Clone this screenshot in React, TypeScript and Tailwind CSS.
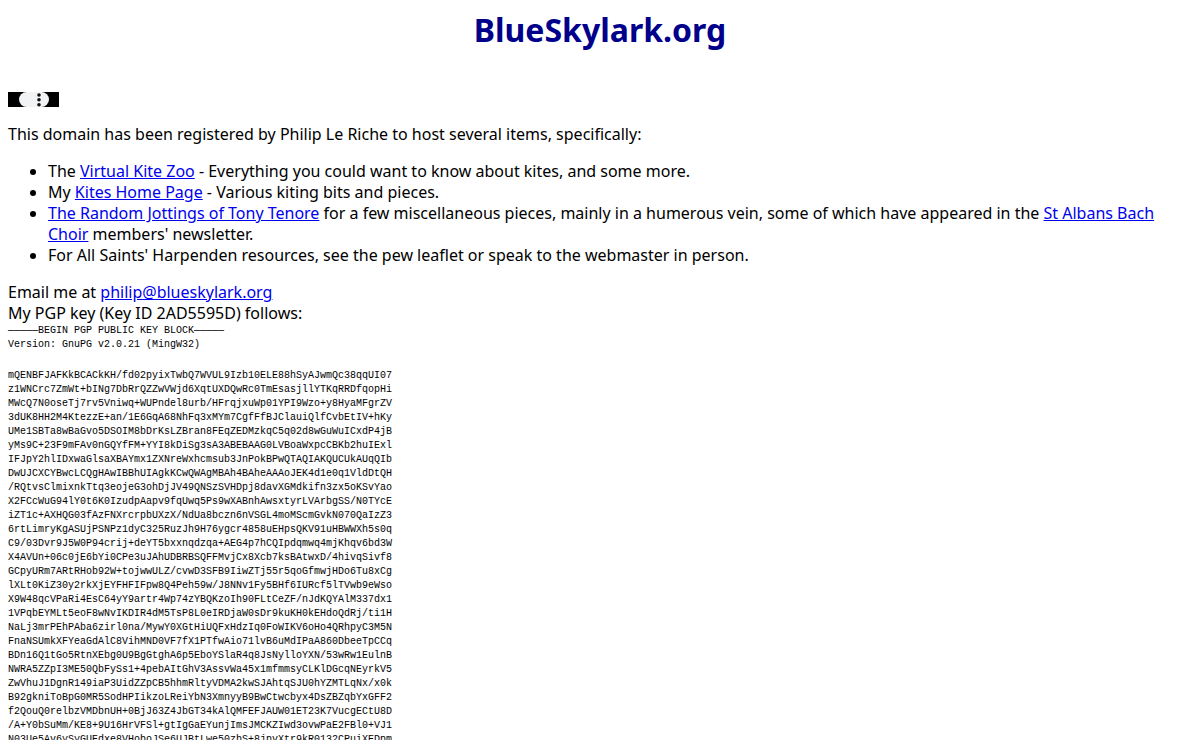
const keyLines = [
  "mQENBFJAFKkBCACkKH/fd02pyixTwbQ7WVUL9Izb10ELE88hSyAJwmQc38qqUI07",
  "z1WNCrc7ZmWt+bINg7DbRrQZZwVWjd6XqtUXDQwRc0TmEsasjllYTKqRRDfqopHi",
  "MWcQ7N0oseTj7rv5Vniwq+WUPndel8urb/HFrqjxuWp01YPI9Wzo+y8HyaMFgrZV",
  "3dUK8HH2M4KtezzE+an/1E6GqA68NhFq3xMYm7CgfFfBJClauiQlfCvbEtIV+hKy",
  "UMe1SBTa8wBaGvo5DSOIM8bDrKsLZBran8FEqZEDMzkqC5q02d8wGuWuICxdP4jB",
  "yMs9C+23F9mFAv0nGQYfFM+YYI8kDiSg3sA3ABEBAAG0LVBoaWxpcCBKb2huIExl",
  "IFJpY2hlIDxwaGlsaXBAYmx1ZXNreWxhcmsub3JnPokBPwQTAQIAKQUCUkAUqQIb",
  "DwUJCXCYBwcLCQgHAwIBBhUIAgkKCwQWAgMBAh4BAheAAAoJEK4d1e0q1VldDtQH",
  "/RQtvsClmixnkTtq3eojeG3ohDjJV49QNSzSVHDpj8davXGMdkifn3zx5oKSvYao",
  "X2FCcWuG94lY0t6K0IzudpAapv9fqUwq5Ps9wXABnhAwsxtyrLVArbgSS/N0TYcE",
  "iZT1c+AXHQG03fAzFNXrcrpbUXzX/NdUa8bczn6nVSGL4moMScmGvkN070QaIzZ3",
  "6rtLimryKgASUjPSNPz1dyC325RuzJh9H76ygcr4858uEHpsQKV91uHBWWXh5s0q",
  "C9/03Dvr9J5W0P94crij+deYT5bxxnqdzqa+AEG4p7hCQIpdqmwq4mjKhqv6bd3W",
  "X4AVUn+06c0jE6bYi0CPe3uJAhUDBRBSQFFMvjCx8Xcb7ksBAtwxD/4hivqSivf8",
  "GCpyURm7ARtRHob92W+tojwwULZ/cvwD3SFB9IiwZTj55r5qoGfmwjHDo6Tu8xCg",
  "lXLt0KiZ30y2rkXjEYFHFIFpw8Q4Peh59w/J8NNv1Fy5BHf6IURcf5lTVwb9eWso",
  "X9W48qcVPaRi4EsC64yY9artr4Wp74zYBQKzoIh90FLtCeZF/nJdKQYAlM337dx1",
  "1VPqbEYMLt5eoF8wNvIKDIR4dM5TsP8L0eIRDjaW0sDr9kuKH0kEHdoQdRj/ti1H",
  "NaLj3mrPEhPAba6zirl0na/MywY0XGtHiUQFxHdzIq0FoWIKV6oHo4QRhpyC3M5N",
  "FnaNSUmkXFYeaGdAlC8VihMND0VF7fX1PTfwAio71lvB6uMdIPaA860DbeeTpCCq",
  "BDn16Q1tGo5RtnXEbg0U9BgGtghA6p5EboYSlaR4q8JsNylloYXN/53wRw1EulnB",
  "NWRA5ZZpI3ME50QbFySs1+4pebAItGhV3AssvWa45x1mfmmsyCLKlDGcqNEyrkV5",
  "ZwVhuJ1DgnR149iaP3UidZZpCB5hhmRltyVDMA2kwSJAhtqSJU0hYZMTLqNx/x0k",
  "B92gkniToBpG0MR5SodHPIikzoLReiYbN3XmnyyB9BwCtwcbyx4DsZBZqbYxGFF2",
  "f2QouQ0relbzVMDbnUH+0BjJ63Z4JbGT34kAlQMFEFJAUW01ET23K7VucgECtU8D",
  "/A+Y0bSuMm/KE8+9U16HrVFSl+gtIgGaEYunjImsJMCKZIwd3ovwPaE2FBl0+VJ1",
  "N03Ue5Av6ySyGUEdxe8VHoboJSe6UJBtLwe50zbS+8jpvXtr9kR0132CPuiXEDpm",
];

const linkClass = "text-[#0000ee] underline";

function MenuBadge() {
  return (
    <svg className="block h-[15px] w-[51px]" viewBox="0 0 51 15" aria-hidden="true">
      <rect width="51" height="15" fill="#000" />
      <rect x="11" y="0" width="30" height="15" rx="7.5" fill="#f1f3f4" />
      <circle cx="31" cy="3" r="1.8" fill="#111" />
      <circle cx="31" cy="7.7" r="1.8" fill="#111" />
      <circle cx="31" cy="12.7" r="1.8" fill="#111" />
    </svg>
  );
}

export default function App() {
  return (
    <main className="bg-white px-2 pt-2 font-['Noto_Sans','Open_Sans',sans-serif] text-base leading-[21px] text-black">
      <h1 className="text-center text-[32px] leading-[44px] font-bold text-[#00008b]">BlueSkylark.org</h1>
      <div className="mt-10">
        <MenuBadge />
      </div>
      <p className="mt-[17px]">
        This domain has been registered by Philip Le Riche to host several items, specifically:
      </p>
      <ul className="mt-4 list-disc pl-10">
        <li>
          The <a href="#kite-zoo" className={linkClass}>Virtual Kite Zoo</a> - Everything you could want to know about kites, and some more.
        </li>
        <li>
          My <a href="#kites" className={linkClass}>Kites Home Page</a> - Various kiting bits and pieces.
        </li>
        <li>
          <a href="#jottings" className={linkClass}>The Random Jottings of Tony Tenore</a> for a few miscellaneous pieces, mainly in a humerous vein, some of which have appeared in the <a href="#choir" className={linkClass}>St Albans Bach Choir</a> members' newsletter.
        </li>
        <li>For All Saints' Harpenden resources, see the pew leaflet or speak to the webmaster in person.</li>
      </ul>
      <p className="mt-4">
        Email me at <a href="mailto:philip@blueskylark.org" className={linkClass}>philip@blueskylark.org</a>
        <br />
        My PGP key (Key ID 2AD5595D) follows:
      </p>
      <div className="font-['Liberation_Mono',monospace] text-[10px] leading-[14px]">
        <p>—————BEGIN PGP PUBLIC KEY BLOCK—————</p>
        <p>Version: GnuPG v2.0.21 (MingW32)</p>
        <pre className="mt-[17px] font-['Liberation_Mono',monospace]">{keyLines.join("\n")}</pre>
      </div>
    </main>
  );
}
